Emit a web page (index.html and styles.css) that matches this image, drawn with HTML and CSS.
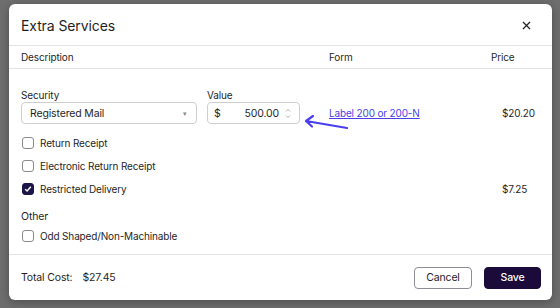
FILE: index.html
```html
<!DOCTYPE html>
<html lang="en">
<head>
    <meta charset="UTF-8">
    <meta name="viewport" content="width=device-width, initial-scale=1.0">
    <title>Extra Services</title>
    <link rel="stylesheet" href="styles.css">
</head>
<body>

    <div class="modal">
        <div class="modal-header">
            <h1>Extra Services</h1>
            <button class="close" aria-label="Close">
                <svg width="9" height="9" viewBox="0 0 9 9"><path d="M1 1L8 8M8 1L1 8" stroke="#222" stroke-width="1.2" fill="none"/></svg>
            </button>
        </div>

        <div class="row table-head">
            <div>Description</div>
            <div>Form</div>
            <div class="price-head">Price</div>
        </div>

        <div class="modal-body">
            <div class="row security-row">
                <div class="fields">
                    <div class="field">
                        <label>Security</label>
                        <div class="select">
                            <span>Registered Mail</span>
                            <span class="caret">&#9662;</span>
                        </div>
                    </div>
                    <div class="field">
                        <label>Value</label>
                        <div class="money">
                            <span>$</span>
                            <span class="amount">500.00</span>
                            <svg class="spin" width="6" height="11" viewBox="0 0 6 11"><path d="M1 3.5L3 1.5L5 3.5M1 7.5L3 9.5L5 7.5" stroke="#999" stroke-width="0.8" fill="none"/></svg>
                        </div>
                    </div>
                </div>
                <div class="cell-end"><a href="#">Label 200 or 200-N</a></div>
                <div class="cell-end price">$20.20</div>
            </div>

            <div class="row check-row">
                <div class="check"><span class="box"></span>Return Receipt</div>
            </div>
            <div class="row check-row">
                <div class="check"><span class="box"></span>Electronic Return Receipt</div>
            </div>
            <div class="row check-row">
                <div class="check"><span class="box checked"><svg width="8" height="8" viewBox="0 0 8 8"><path d="M1.2 4.2L3.1 6L6.8 1.8" stroke="#fff" stroke-width="1.4" fill="none"/></svg></span>Restricted Delivery</div>
                <div></div>
                <div class="price">$7.25</div>
            </div>

            <div class="group-label">Other</div>
            <div class="row check-row">
                <div class="check"><span class="box"></span>Odd Shaped/Non-Machinable</div>
            </div>

            <svg class="arrow" width="48" height="20" viewBox="0 0 48 20"><path d="M44 14L3 7M3 7L10 2M3 7L9 12.5" stroke="#4a3ff0" stroke-width="2.2" stroke-linecap="round" stroke-linejoin="round" fill="none"/></svg>
        </div>

        <div class="modal-footer">
            <div class="total">Total Cost:<span>$27.45</span></div>
            <div class="actions">
                <button class="btn cancel">Cancel</button>
                <button class="btn save">Save</button>
            </div>
        </div>
    </div>

</body>
</html>
```

FILE: styles.css
```css
body {
    font-family: Inter, "Liberation Sans", sans-serif;
    margin: 0;
    height: 308px;
    overflow: hidden;
    background-color: #6e6e6e;
    padding: 4px 8px 0 9px;
    box-sizing: border-box;
    color: #1f1f1f;
    letter-spacing: -0.15px;
}
.modal {
    background-color: #fff;
    border-radius: 6px;
    width: 543px;
    height: 296px;
    box-shadow: 0 2px 10px rgba(0, 0, 0, 0.3);
    display: flex;
    flex-direction: column;
}
.modal-header {
    height: 42px;
    display: flex;
    align-items: center;
    justify-content: space-between;
    padding: 1px 21px 0 12px;
    box-sizing: border-box;
    border-bottom: 1px solid #e4e4e4;
}
h1 {
    font-size: 14px;
    font-weight: 400;
    margin: 0;
    letter-spacing: -0.1px;
}
.close {
    border: none;
    background: none;
    padding: 0;
    width: 9px;
    height: 9px;
    display: flex;
}
.row {
    display: grid;
    grid-template-columns: 308px 162px 1fr;
    padding-left: 12px;
}
.table-head {
    height: 22px;
    align-items: center;
    font-size: 10px;
    border-bottom: 1px solid #e4e4e4;
}
.modal-body {
    position: relative;
    padding-top: 19px;
    font-size: 10px;
    flex: 1;
}
.fields {
    display: flex;
    gap: 10px;
}
.field label {
    display: block;
    font-size: 10px;
    line-height: 14px;
}
.select,
.money {
    height: 22px;
    box-sizing: border-box;
    border: 1px solid #cfcfcf;
    border-radius: 4px;
    display: flex;
    align-items: center;
    font-size: 10.5px;
}
.select {
    width: 176px;
    padding: 0 9px 0 8px;
    justify-content: space-between;
}
.caret {
    color: #888;
    font-size: 7px;
}
.money {
    width: 93px;
    padding: 0 8px 0 6px;
}
.amount {
    flex: 1;
    text-align: right;
    margin-right: 6px;
}
.cell-end {
    align-self: end;
    height: 22px;
    display: flex;
    align-items: center;
}
a {
    color: #4a3fe6;
}
.price {
    padding-left: 11px;
    display: flex;
    align-items: center;
}
.security-row {
    margin-bottom: 7px;
}
.check-row {
    height: 23px;
    align-items: center;
}
.check {
    display: flex;
    align-items: center;
}
.box {
    width: 12px;
    height: 12px;
    box-sizing: border-box;
    border: 1px solid #8a8a8a;
    border-radius: 3px;
    margin: 0 6px 0 1px;
    display: flex;
    align-items: center;
    justify-content: center;
}
.box.checked {
    background-color: #1c1548;
    border-color: #1c1548;
}
.group-label {
    font-size: 10.5px;
    line-height: 14px;
    margin: 10px 0 0 12px;
}
.arrow {
    position: absolute;
    left: 294px;
    top: 45px;
}
.modal-footer {
    height: 45px;
    border-top: 1px solid #e4e4e4;
    display: flex;
    align-items: center;
    justify-content: space-between;
    padding: 0 11px 0 12px;
    font-size: 10.5px;
}
.total span {
    margin-left: 10px;
}
.actions {
    display: flex;
    gap: 12px;
}
.btn {
    height: 22px;
    border-radius: 4px;
    font-family: inherit;
    font-size: 10.5px;
    letter-spacing: -0.15px;
    padding: 0;
}
.cancel {
    width: 58px;
    background-color: #fff;
    border: 1px solid #8f8c99;
    color: #222;
}
.save {
    width: 57px;
    background-color: #1a0b3b;
    border: 1px solid #1a0b3b;
    color: #fff;
    font-weight: 500;
}
```
